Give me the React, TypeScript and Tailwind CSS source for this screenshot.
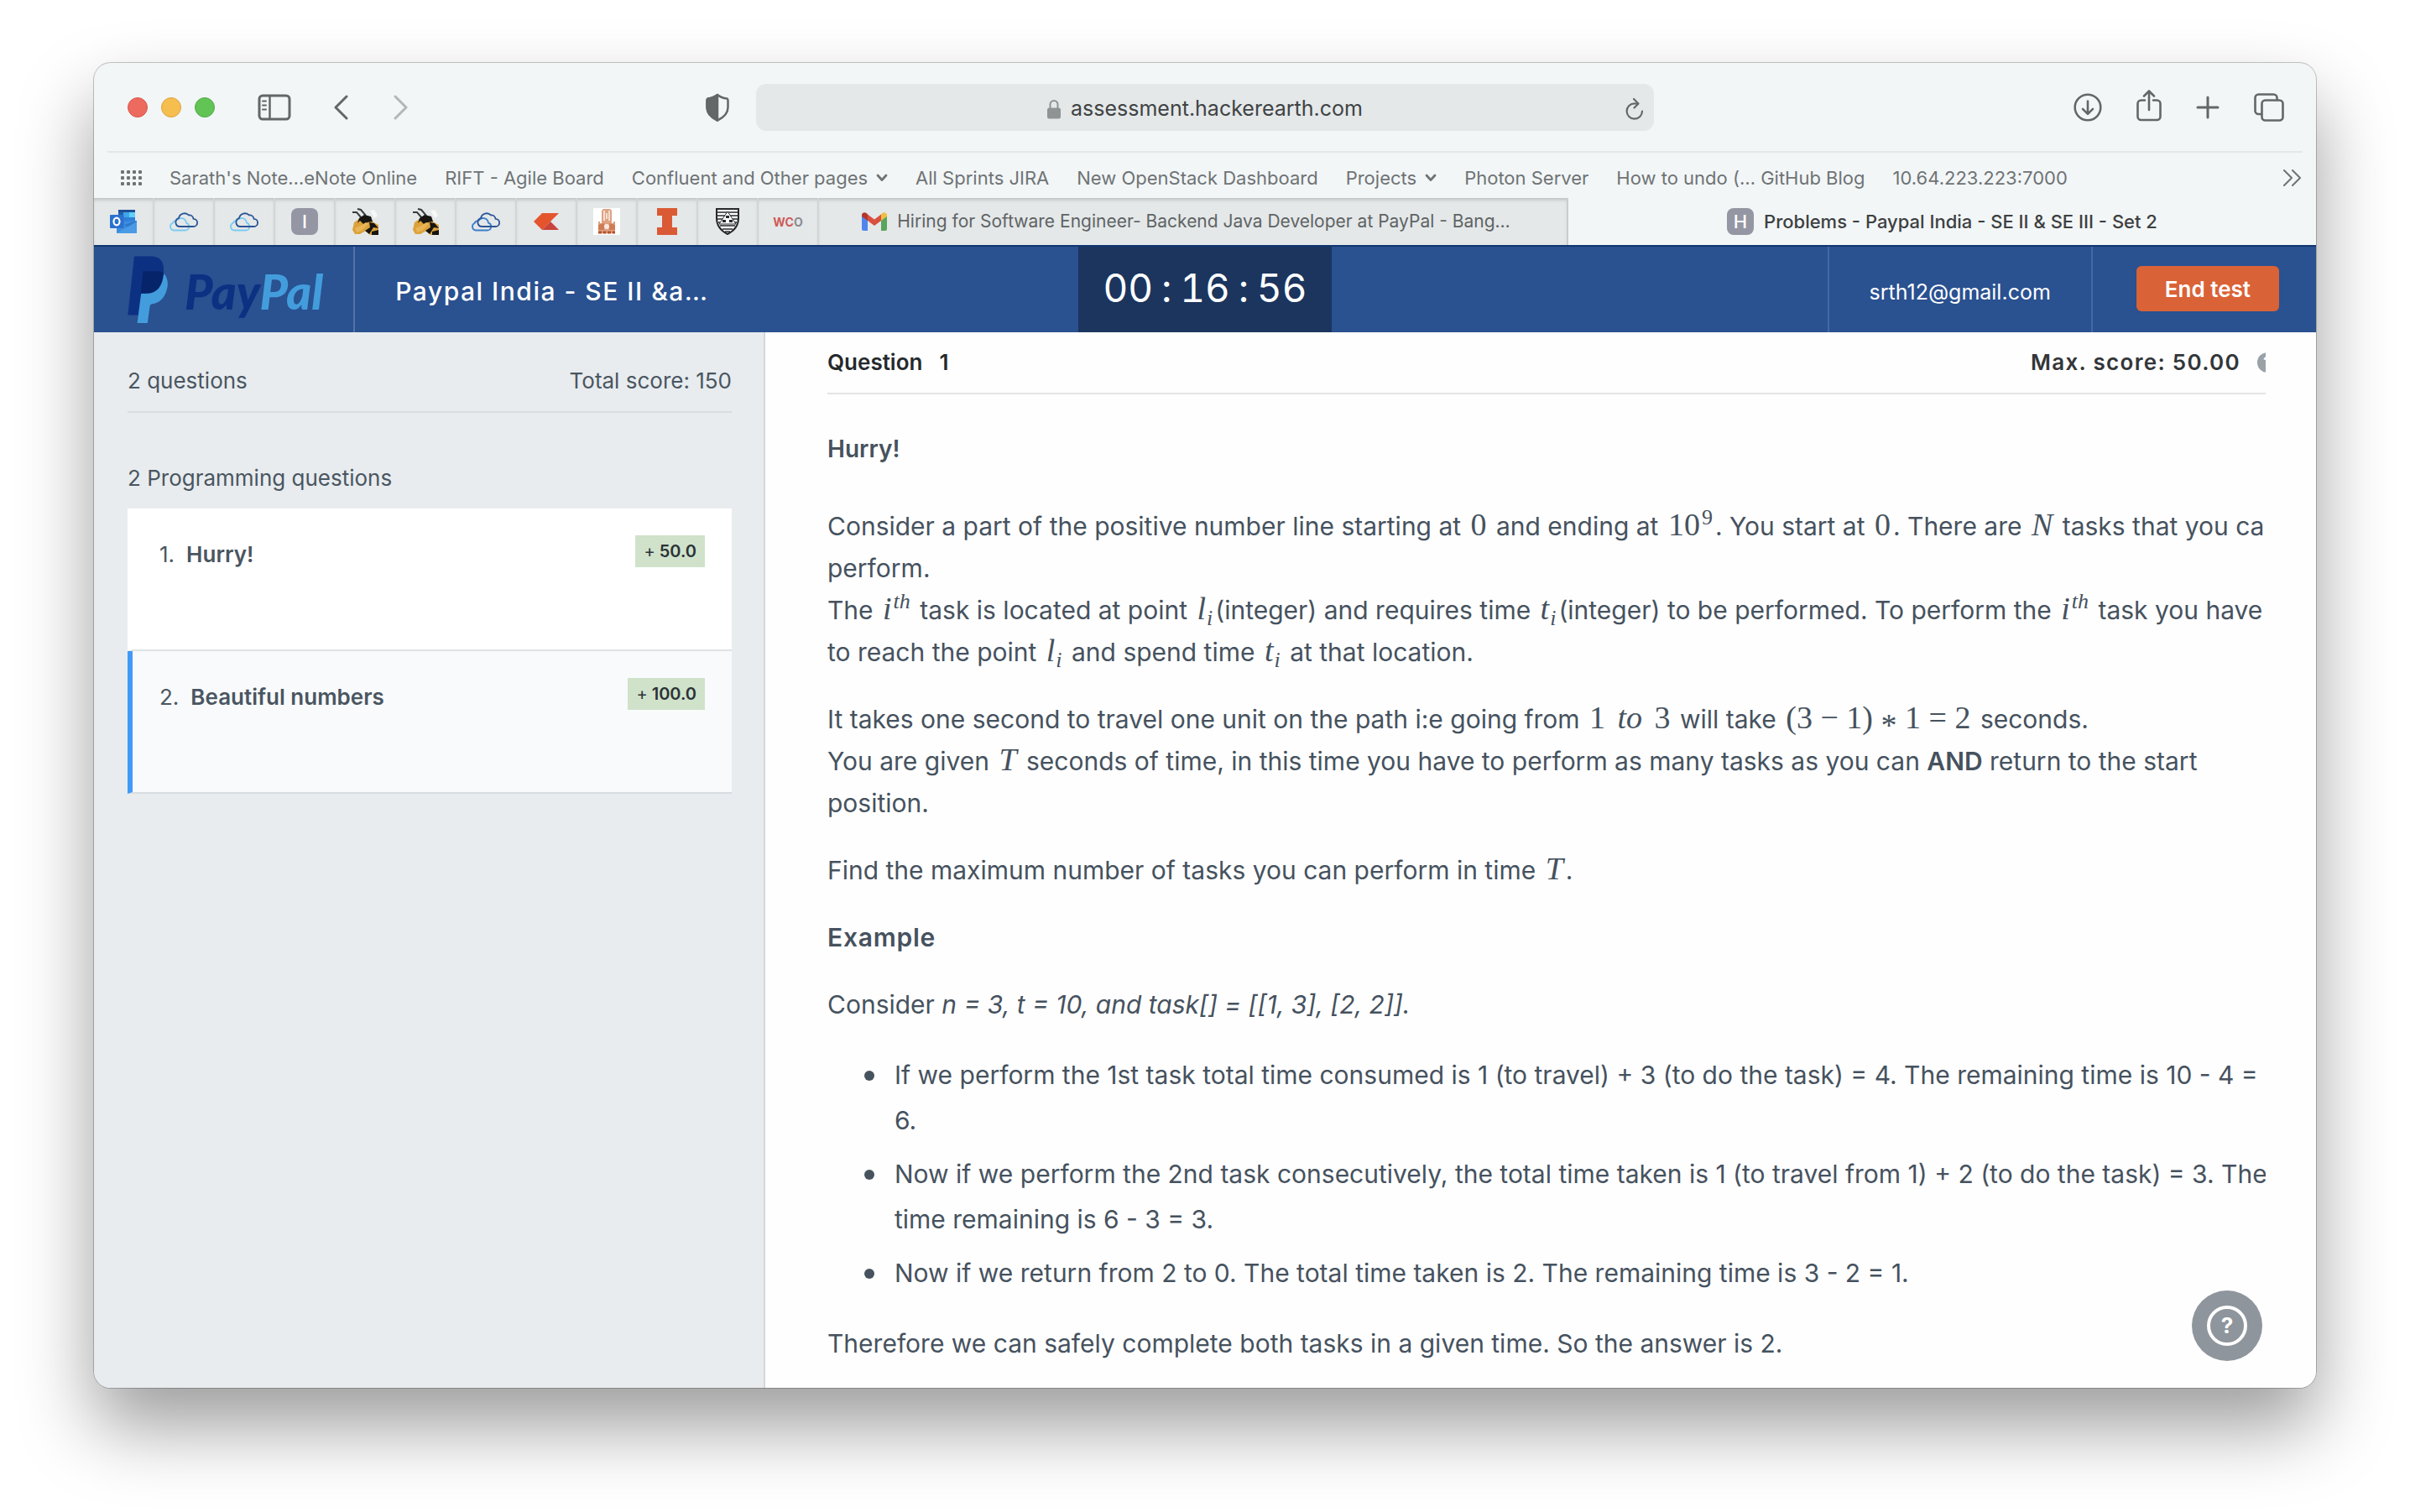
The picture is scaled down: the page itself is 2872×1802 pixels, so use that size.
import type { ReactNode } from "react";

/* ---------- browser chrome icons ---------- */

const stroke = {
  fill: "none",
  stroke: "currentColor",
  strokeLinecap: "round" as const,
  strokeLinejoin: "round" as const,
};

function SidebarIcon() {
  return (
    <svg viewBox="0 0 40 32" className="h-8 w-10" {...stroke} strokeWidth="3">
      <rect x="2" y="2" width="36" height="28" rx="4" />
      <path d="M14.500 2v28" strokeWidth="2.500" />
      <path d="M6 8.500h4M6 13.500h4M6 18.500h4" strokeWidth="2" />
    </svg>
  );
}

function ChevronIcon({ flip }: { flip?: boolean }) {
  return (
    <svg viewBox="0 0 18 30" className="h-[30px] w-[18px]" {...stroke} strokeWidth="3">
      <path d={flip ? "M2 2l13 13L2 28" : "M16 2L3 15l13 13"} />
    </svg>
  );
}

function ShieldIcon() {
  return (
    <svg viewBox="0 0 28 34" className="h-[34px] w-7" {...stroke} strokeWidth="2.500">
      <path d="M14 2c3 2.500 7 4 11.500 4.500C26.500 7 26.500 8 26.500 9v8c0 7-5 12-12.500 15.500C6.500 29 1.500 24 1.500 17V9c0-1 0-2 1-2.500C7 6 11 4.500 14 2z" />
      <path d="M14 2C11 4.500 7 6 2.500 6.500c-1 .5-1 1.500-1 2.500v8c0 7 5 12 12.500 15.500z" fill="currentColor" />
    </svg>
  );
}

function LockIcon() {
  return (
    <svg viewBox="0 0 16 24" className="h-6 w-4 text-[#8f9394]">
      <path d="M3.500 11V6.500a4.500 4.500 0 0 1 9 0V11" fill="none" stroke="currentColor" strokeWidth="2" />
      <rect x="0" y="10.500" width="16" height="13" rx="2.500" fill="currentColor" />
    </svg>
  );
}

function ReloadIcon() {
  return (
    <svg viewBox="0 0 22 28" className="h-7 w-[22px]" {...stroke} strokeWidth="2.200">
      <path d="M20 16.500a9.200 9.200 0 1 1-9.200-9.200c1.200 0 2.300.1 3.400.4" />
      <path d="M10 2l5.500 5.500-5 5" />
    </svg>
  );
}

function DownloadIcon() {
  return (
    <svg viewBox="0 0 34 34" className="size-[34px]" {...stroke} strokeWidth="2.600">
      <circle cx="17" cy="17" r="15.300" />
      <path d="M17 9.500v15M11 18.800l6 6 6-6" />
    </svg>
  );
}

function ShareIcon() {
  return (
    <svg viewBox="0 0 30 38" className="h-[38px] w-[30px]" {...stroke} strokeWidth="2.600">
      <path d="M10 12.500H5.500a4 4 0 0 0-4 4V32a4 4 0 0 0 4 4h19a4 4 0 0 0 4-4V16.500a4 4 0 0 0-4-4H20" />
      <path d="M15 24V2M9 7.500L15 1.500l6 6" />
    </svg>
  );
}

function PlusIcon() {
  return (
    <svg viewBox="0 0 28 28" className="size-7" {...stroke} strokeWidth="3">
      <path d="M14 2v24M2 14h24" />
    </svg>
  );
}

function TabsIcon() {
  return (
    <svg viewBox="0 0 36 34" className="h-[34px] w-9" {...stroke} strokeWidth="2.600">
      <path d="M9 25H5.500a4 4 0 0 1-4-4V5.500a4 4 0 0 1 4-4h18a4 4 0 0 1 4 4V8" />
      <rect x="9.500" y="8.500" width="25" height="24" rx="4" />
    </svg>
  );
}

function GridIcon() {
  return (
    <svg viewBox="0 0 25 18" className="h-[18px] w-[25px]" fill="currentColor">
      {[0, 7, 14].map((y) =>
        [0, 7, 14, 21].map((x) => <rect key={`${x}-${y}`} x={x} y={y} width="4" height="4" rx="1" />),
      )}
    </svg>
  );
}

function CaretIcon() {
  return (
    <svg viewBox="0 0 14 10" className="h-2.5 w-3.5" {...stroke} strokeWidth="2.800">
      <path d="M2 2l5 5.500L12 2" />
    </svg>
  );
}

function MoreIcon() {
  return (
    <svg viewBox="0 0 24 20" className="h-5 w-6" {...stroke} strokeWidth="2">
      <path d="M2 1l9 9-9 9M12 1l9 9-9 9" />
    </svg>
  );
}

/* ---------- favicons ---------- */

function OutlookIcon() {
  return (
    <svg viewBox="0 0 32 28" className="h-7 w-8">
      <rect x="10" y="0" width="20" height="16" fill="#2f7fd8" />
      <rect x="10" y="0" width="20" height="3" fill="#1c4f94" />
      <rect x="16" y="3" width="7" height="6" fill="#3fa6e8" />
      <rect x="23" y="3" width="7" height="6" fill="#62d0f8" />
      <rect x="10" y="3" width="6" height="10" fill="#215fb0" />
      <path d="M8 14l24-1v15H8z" fill="#3b8de0" />
      <path d="M32 13v15L17 18z" fill="#2f78cb" />
      <path d="M8 28l24-14v14z" fill="#4a9ae6" />
      <rect x="0" y="6" width="16.500" height="16" rx="1" fill="#2b71cf" />
      <ellipse cx="8" cy="14" rx="3.500" ry="4.300" fill="none" stroke="#fff" strokeWidth="2.200" />
    </svg>
  );
}

function CloudsIcon({ dark }: { dark?: boolean }) {
  const cloud = "M6 20.500h14a4.500 4.500 0 0 0 1-8.800 6.500 6.500 0 0 0-12-2.500A5 5 0 0 0 4.500 12 4.500 4.500 0 0 0 6 20.500z";
  return (
    <svg viewBox="0 0 34 24" className="h-6 w-[34px]" {...stroke} strokeWidth="1.800">
      <path d={cloud} transform="translate(-1 2)" stroke={dark ? "#3a7cc9" : "#7ccbf0"} />
      <path
        d="M12.500 18h16a4.600 4.600 0 0 0 0-9.200A5 5 0 0 0 23 4.500 7 7 0 0 0 11 8.200 5 5 0 0 0 12.500 18z"
        stroke="#2c5596"
      />
    </svg>
  );
}

function LetterIcon({ children }: { children: string }) {
  return (
    <span className="flex size-8 items-center justify-center rounded-lg bg-[#9596a3] text-[22px] font-medium text-white">
      {children}
    </span>
  );
}

function BeeIcon() {
  return (
    <svg viewBox="0 0 32 32" className="size-8">
      <path d="M22 3l5-1 4 7-4 3z" fill="#f7f7f5" />
      <path d="M1 5l5 0 6 7M7 1l4 1 6 7" fill="none" stroke="#3a3a3a" strokeWidth="2" />
      <path d="M3 17l7-5 12-1 4 6 6 3v12H22l-5-5-7 4H4l-3-5z" fill="#dca23a" />
      <path d="M9 12l6-4 8 2 2 6-6 1-5 2-4-4-3 3z" fill="#171512" />
      <path d="M21 17l6 1 5 6-6-1-5 8-5-4 6-4z" fill="#171512" />
      <path d="M24 28l8-2v6h-8z" fill="#171512" />
      <path d="M4 24l7-3 6-4 3 2-8 8-6 2z" fill="#e8b456" />
    </svg>
  );
}

function ArrowIcon() {
  return (
    <svg viewBox="0 0 30 20" className="h-5 w-[30px]">
      <path d="M0 10L10 0h20L20 10z" fill="#e4552d" />
      <path d="M0 10l10 10 10-10z" fill="#e4552d" />
      <path d="M10 20l10-10 10 10z" fill="#c9443c" />
    </svg>
  );
}

function TowerIcon() {
  return (
    <svg viewBox="0 0 32 32" className="size-8">
      <rect width="32" height="32" fill="#fff" />
      <path d="M12 1h8l2 2v15h2v-2h2v14H6V16h2v2h2V3z" fill="#dfa283" />
      <path d="M13 3v12M19 3v12M16 6v7" stroke="#f7dfd2" strokeWidth="2" />
      <path d="M6 20l7-2v8H6zM26 20l-7-2v8h7z" fill="#cf7c55" />
      <circle cx="16" cy="22" r="3" fill="#fbe9df" />
      <path d="M6 29h20" stroke="#b5532f" strokeWidth="3" strokeDasharray="4 1.500" />
    </svg>
  );
}

function BlockIcon() {
  return (
    <svg viewBox="0 0 24 32" className="h-8 w-6">
      <path d="M0 0h24v9h-6v14h6v9H0v-9h6V9H0z" fill="#da5a35" />
    </svg>
  );
}

function CrestIcon() {
  return (
    <svg viewBox="0 0 28 32" className="h-8 w-7">
      <path d="M1 1h26v11c0 9-5 15-13 19C6 27 1 21 1 12z" fill="#fff" stroke="#26282a" strokeWidth="2" />
      <path d="M2 5h24M2 9h9M17 9h9M2 13h6M20 13h6M3 17h3M22 17h3M5 21h18M8 25h12M11 28h6" stroke="#26282a" strokeWidth="1.500" />
      <path d="M14 4l10 15H4z" fill="#fff" stroke="#26282a" strokeWidth="1" />
      <path d="M12 9h4v3h-4zM8 14h4v3H8zM16 14h4v3h-4z" fill="#26282a" />
    </svg>
  );
}

function WcoIcon() {
  return (
    <span className="text-[14px] font-bold text-[#cf5a58]">
      WC<span className="text-[#8a8c90]">O</span>
    </span>
  );
}

function GmailIcon() {
  return (
    <svg viewBox="0 0 30 22" className="h-[22px] w-[30px]">
      <path d="M0 4v16a2 2 0 0 0 2 2h5V9z" fill="#4f86ec" />
      <path d="M30 4v16a2 2 0 0 1-2 2h-5V9z" fill="#58a65c" />
      <path d="M7 2.500l8 6 8-6V10l-8 6-8-6z" fill="#d9503f" />
      <path d="M0 3.500C0 .5 3-.8 5.500 1L7 2.200V10L0 5z" fill="#b3382c" />
      <path d="M30 3.500c0-3-3-4.300-5.500-2.500L23 2.200V10l7-5z" fill="#f1bf42" />
    </svg>
  );
}

/* ---------- page pieces ---------- */

function PaypalLogo() {
  return (
    <a href="#home" aria-label="PayPal home" className="flex items-center">
      <svg viewBox="126 222 145 241" className="h-20 w-12">
        <path d="M150 223h66c28 1 42 22 40 52-3 40-26 70-60 78l-21 4-10 78h-38z" fill="#0c3183" />
        <path
          d="M255 285c13 10 17 26 15 46-6 36-24 56-47 62-12 2-16 3-17 12l-8 58h-37l14-106c50 2 74-22 80-72z"
          fill="#439ddc"
        />
        <path d="M182 277h54c12 0 18 3 20 8-4 46-24 72-62 72h-21z" fill="#05246a" />
      </svg>
      <span className="ml-5 pt-1 font-['Lato','Liberation_Sans',sans-serif] text-[57px] leading-none font-black text-[#0c3183] italic">
        Pay<span className="text-[#439ddc]">Pal</span>
      </span>
    </a>
  );
}

function M({ children, up }: { children: ReactNode; up?: boolean }) {
  return (
    <span
      className={
        up
          ? "mx-[3px] font-['Liberation_Serif',serif] text-[38px] leading-none"
          : "mx-[3px] font-['Liberation_Serif',serif] text-[38px] leading-none italic"
      }
    >
      {children}
    </span>
  );
}

function Sup({ children }: { children: ReactNode }) {
  return <sup className="ml-0.5 text-[26px]">{children}</sup>;
}

function Sub({ children }: { children: ReactNode }) {
  return <sub className="ml-px text-[26px]">{children}</sub>;
}

const bookmarks = [
  { label: "Sarath's Note…eNote Online" },
  { label: "RIFT - Agile Board" },
  { label: "Confluent and Other pages", menu: true },
  { label: "All Sprints JIRA" },
  { label: "New OpenStack Dashboard" },
  { label: "Projects", menu: true },
  { label: "Photon Server" },
  { label: "How to undo (… GitHub Blog" },
  { label: "10.64.223.223:7000" },
];

const pinned: { name: string; icon: ReactNode }[] = [
  { name: "Outlook", icon: <OutlookIcon /> },
  { name: "Cloud 1", icon: <CloudsIcon /> },
  { name: "Cloud 2", icon: <CloudsIcon /> },
  { name: "I", icon: <LetterIcon>I</LetterIcon> },
  { name: "Bee 1", icon: <BeeIcon /> },
  { name: "Bee 2", icon: <BeeIcon /> },
  { name: "Cloud 3", icon: <CloudsIcon dark /> },
  { name: "Arrow", icon: <ArrowIcon /> },
  { name: "Tower", icon: <TowerIcon /> },
  { name: "Block", icon: <BlockIcon /> },
  { name: "Crest", icon: <CrestIcon /> },
  { name: "WCO", icon: <WcoIcon /> },
];

const questions = [
  { n: 1, title: "Hurry!", score: "50.0" },
  { n: 2, title: "Beautiful numbers", score: "100.0", active: true },
];

function Toolbar() {
  return (
    <div className="px-4">
      <div className="grid h-[107px] grid-cols-[1fr_minmax(0,1070px)_1fr] items-center border-b-2 border-[#e3e7e8] text-[#636768]">
        <div className="flex items-center pl-6">
          <div className="flex gap-4">
            <button aria-label="Close" className="size-6 rounded-full border border-[#d9574c] bg-[#ed6a5e]" />
            <button aria-label="Minimize" className="size-6 rounded-full border border-[#dda340] bg-[#f5be4f]" />
            <button aria-label="Zoom" className="size-6 rounded-full border border-[#54a945] bg-[#61c455]" />
          </div>
          <button aria-label="Sidebar" className="ml-[51px]"><SidebarIcon /></button>
          <button aria-label="Back" className="ml-[50px]"><ChevronIcon /></button>
          <button aria-label="Forward" className="ml-[54px] text-[#b3b7b8]"><ChevronIcon flip /></button>
          <button aria-label="Privacy report" className="mr-8 ml-auto"><ShieldIcon /></button>
        </div>
        <label className="grid h-14 grid-cols-[1fr_auto_1fr] items-center rounded-xl bg-[#e4e8e9] pt-1">
          <span />
          <span className="flex items-center gap-3">
            <LockIcon />
            <input
              aria-label="Address"
              defaultValue="assessment.hackerearth.com"
              className="field-sizing-content bg-transparent text-[25px] text-[#404344] outline-none"
            />
          </span>
          <button aria-label="Reload" className="mr-3 justify-self-end"><ReloadIcon /></button>
        </label>
        <div className="flex items-center justify-end gap-[41px] pr-[22px]">
          <button aria-label="Downloads"><DownloadIcon /></button>
          <button aria-label="Share" className="pb-1"><ShareIcon /></button>
          <button aria-label="New tab"><PlusIcon /></button>
          <button aria-label="Tab overview"><TabsIcon /></button>
        </div>
      </div>
    </div>
  );
}

function Bookmarks() {
  return (
    <nav className="flex h-[54px] items-center gap-[33px] pt-1.5 pr-4 pl-8 text-[22px] whitespace-nowrap text-[#6f7375]">
      <button aria-label="Favorites"><GridIcon /></button>
      {bookmarks.map((b) => (
        <a key={b.label} href="#bookmark" className="flex items-center gap-2.5">
          {b.label}
          {b.menu && <CaretIcon />}
        </a>
      ))}
      <button aria-label="More bookmarks" className="ml-auto"><MoreIcon /></button>
    </nav>
  );
}

function Tabs() {
  return (
    <div className="flex h-14 text-[21px] whitespace-nowrap">
      {pinned.map((t) => (
        <button
          key={t.name}
          aria-label={t.name}
          className="flex w-[72px] items-center justify-center border-r-2 border-[#d2d6d7] bg-[#e4e8e9] shadow-[inset_0_4px_4px_-2px_#b9bdbe]"
        >
          {t.icon}
        </button>
      ))}
      <button className="flex flex-1 items-center justify-center gap-3 border-r-2 border-[#c9cdce] bg-[#e4e8e9] pr-4 text-[#5f6364] shadow-[inset_0_4px_4px_-2px_#b9bdbe]">
        <GmailIcon />
        Hiring for Software Engineer- Backend Java Developer at PayPal - Bang…
      </button>
      <button className="flex flex-1 items-center justify-center gap-3 px-2 text-[22px] font-medium text-[#3d4041]">
        <LetterIcon>H</LetterIcon>
        Problems - Paypal India - SE II &amp; SE III - Set 2
      </button>
    </div>
  );
}

function Header() {
  return (
    <header className="grid h-26 grid-cols-[1fr_auto_1fr] border-t-2 border-[#123671] bg-[#2a5190] text-white">
      <div className="flex">
        <div className="flex items-center border-r-2 border-[#5474a8] pr-9 pl-10">
          <PaypalLogo />
        </div>
        <h1 className="flex items-center pt-1 pl-12 text-[30px] font-medium tracking-wider">Paypal India - SE II &amp;a…</h1>
      </div>
      <div className="flex w-[302px] items-center justify-center bg-[#1b355e] pb-1 text-[46px] tabular-nums" role="timer">
        <span>00</span>
        <span className="w-8 text-center">:</span>
        <span>16</span>
        <span className="w-8 text-center">:</span>
        <span>56</span>
      </div>
      <div className="flex justify-end">
        <div className="flex items-center border-x-2 border-[#4469a3] px-12 pt-2 text-[25px]">srth12@gmail.com</div>
        <div className="flex items-center pr-11 pb-0.5 pl-[52px]">
          <button className="h-[54px] rounded-md bg-[#da6237] px-[34px] text-[26px] font-semibold">End test</button>
        </div>
      </div>
    </header>
  );
}

function Sidebar() {
  return (
    <aside className="w-[800px] shrink-0 border-r-2 border-[#d3d7da] bg-[#e8ecef] pt-[38px] pr-[38px] pl-10 text-[26px] leading-10 text-[#4a5661]">
      <div className="flex justify-between border-b-2 border-[#d8dde1] pb-4">
        <span>2 questions</span>
        <span>Total score: 150</span>
      </div>
      <h2 className="mt-[58px] mb-4">2 Programming questions</h2>
      <ol>
        {questions.map((q) => (
          <li
            key={q.n}
            className={
              q.active
                ? "border-b-2 border-l-[6px] border-b-[#d8dde1] border-l-[#4299f7] bg-[#f8fafc]"
                : "border-b-2 border-l-[6px] border-b-[#dfe2e5] border-l-white bg-white"
            }
          >
            <a href="#question" className="flex h-42 items-start justify-between py-8 pr-8 pl-8">
              <span className="leading-[46px]">
                {q.n}.<b className="ml-3.5 font-semibold">{q.title}</b>
              </span>
              <span className="bg-[#d0e2ca] px-2.5 text-[20px] leading-[38px] font-semibold text-[#2b3238]">
                <span className="font-normal">+</span> {q.score}
              </span>
            </a>
          </li>
        ))}
      </ol>
    </aside>
  );
}

function Bullet({ children }: { children: ReactNode }) {
  return (
    <li className="flex gap-6 leading-[54px]">
      <span className="mt-[22px] size-3 shrink-0 rounded-full bg-[#46525e]" />
      <span>{children}</span>
    </li>
  );
}

function Question() {
  return (
    <main className="relative min-w-0 flex-1 bg-[#fefefe] pr-[60px] pb-7 pl-[74px] text-[30px] leading-[50px] text-[#46525e]">
      <div className="overflow-hidden whitespace-nowrap">
        <div className="-mr-3.5 flex items-center border-b-2 border-[#e2e4e6] pt-4 pb-4 text-[26px] leading-10 font-semibold text-[#25292d]">
          <span>Question</span>
          <span className="ml-5">1</span>
          <span className="ml-auto tracking-wider text-[#333639]">Max. score: 50.00</span>
          <button
            aria-label="Score help"
            className="ml-5 flex size-6 items-center justify-center rounded-full bg-[#9aa1a7] text-[18px] font-bold text-white"
          >
            ?
          </button>
        </div>

        <h2 className="mt-10 text-[28px] font-semibold">Hurry!</h2>

        <p className="mt-[42px]">
          Consider a part of the positive number line starting at <M up>0</M> and ending at{" "}
          <M up>10<Sup>9</Sup></M>. You start at <M up>0</M>. There are <M>N</M> tasks that you can
          <br />
          perform.
          <br />
          The <M>i<Sup>th</Sup></M>{" "} task is located at point <M>l<Sub>i</Sub></M>(integer) and requires time{" "}
          <M>t<Sub>i</Sub></M>(integer) to be performed. To perform the <M>i<Sup>th</Sup></M>{" "} task you have
          <br />
          to reach the point <M>l<Sub>i</Sub></M> and spend time <M>t<Sub>i</Sub></M> at that location.
        </p>

        <p className="mt-[30px]">
          It takes one second to travel one unit on the path i:e going from <M up>1</M> <M>to</M> <M up>3</M> will take{" "}
          <M up>
            (3 − 1) <span className="align-sub leading-0">*</span> 1 = 2
          </M>{" "}
          seconds.
          <br />
          You are given <M>T</M> seconds of time, in this time you have to perform as many tasks as you can{" "}
          <b className="font-semibold">AND</b> return to the start
          <br />
          position.
        </p>

        <p className="mt-[30px]">
          Find the maximum number of tasks you can perform in time <M>T</M>.
        </p>

        <h3 className="mt-[30px] font-semibold tracking-wide">Example</h3>

        <p className="mt-[30px]">
          Consider <i>n = 3, t = 10, and task[] = [[1, 3], [2, 2]].</i>
        </p>

        <ul className="mt-8 flex flex-col gap-2.5 pl-11">
          <Bullet>
            If we perform the 1st task total time consumed is 1 (to travel) + 3 (to do the task) = 4. The remaining time is 10 - 4 =
            <br />
            6.
          </Bullet>
          <Bullet>
            Now if we perform the 2nd task consecutively, the total time taken is 1 (to travel from 1) + 2 (to do the task) = 3. The
            <br />
            time remaining is 6 - 3 = 3.
          </Bullet>
          <Bullet>Now if we return from 2 to 0. The total time taken is 2. The remaining time is 3 - 2 = 1.</Bullet>
        </ul>

        <p className="mt-8">Therefore we can safely complete both tasks in a given time. So the answer is 2.</p>
      </div>

      <button
        aria-label="Help"
        className="absolute right-16 bottom-8 flex size-[84px] items-center justify-center rounded-full bg-[#8f959c]"
      >
        <span className="flex size-12 items-center justify-center rounded-full border-4 border-white text-[26px] leading-none font-bold text-white">
          ?
        </span>
      </button>
    </main>
  );
}

export default function App() {
  return (
    <div className="min-h-screen bg-white px-28 pt-[75px] pb-[148px] font-['Inter',sans-serif]">
      <div className="overflow-hidden rounded-[20px] bg-[#f2f6f7] shadow-[0_0_0_1px_rgba(0,0,0,0.22),0_46px_88px_rgba(0,0,0,0.39)]">
        <Toolbar />
        <Bookmarks />
        <Tabs />
        <Header />
        <div className="flex">
          <Sidebar />
          <Question />
        </div>
      </div>
    </div>
  );
}
